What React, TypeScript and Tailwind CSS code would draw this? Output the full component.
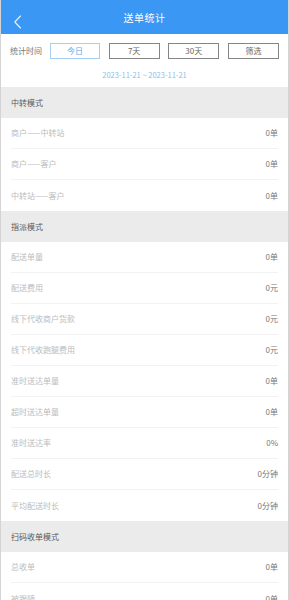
const font = { fontFamily: '"Noto Sans CJK SC", "Noto Sans", sans-serif' }

type Row = { label: string; value: string }

const sections: { title: string; rows: Row[] }[] = [
  {
    title: '中转模式',
    rows: [
      { label: '商户——中转站', value: '0单' },
      { label: '商户——客户', value: '0单' },
      { label: '中转站——客户', value: '0单' },
    ],
  },
  {
    title: '指派模式',
    rows: [
      { label: '配送单量', value: '0单' },
      { label: '配送费用', value: '0元' },
      { label: '线下代收商户货款', value: '0元' },
      { label: '线下代收跑腿费用', value: '0元' },
      { label: '准时送达单量', value: '0单' },
      { label: '超时送达单量', value: '0单' },
      { label: '准时送达率', value: '0%' },
      { label: '配送总时长', value: '0分钟' },
      { label: '平均配送时长', value: '0分钟' },
    ],
  },
  {
    title: '扫码收单模式',
    rows: [
      { label: '总收单', value: '0单' },
      { label: '被跟随', value: '0单' },
    ],
  },
]

export default function App() {
  const tabs = ['今日', '7天', '30天', '筛选']

  return (
    <div style={font} className="w-[289px] h-[600px] overflow-hidden bg-white border-x border-[#d4d4d4]">
      {/* header */}
      <div className="relative h-[34px] bg-[#3a97f3] flex items-center justify-center">
        <svg className="absolute left-[12px] top-[15px]" width="9" height="14" viewBox="0 0 9 14" fill="none">
          <path d="M7.5 1 L1.8 7 L7.5 13" stroke="#e8f2fd" strokeWidth="1.1" strokeLinecap="round" strokeLinejoin="round" />
        </svg>
        <span className="text-white text-[10px] tracking-[0.5px]">送单统计</span>
      </div>

      {/* filter */}
      <div className="flex items-center pt-[9px] pl-[9px] pr-[9px]">
        <span className="w-[40px] text-[8px] text-[#777]">统计时间</span>
        <div className="flex-1 flex justify-between">
          {tabs.map((t, i) => (
            <div
              key={t}
              className={
                i === 0
                  ? 'w-[50px] h-[16px] flex items-center justify-center border border-[#a7cff2] text-[8px] text-[#5aa6ec]'
                  : 'w-[51px] h-[16px] flex items-center justify-center border border-[#858585] text-[8px] text-[#666]'
              }
            >
              {t}
            </div>
          ))}
        </div>
      </div>
      <div className="h-[28px] pt-[4px] flex items-center justify-center text-[7.5px] text-[#8ebde9]">
        2023-11-21 ~ 2023-11-21
      </div>

      {sections.map((s) => (
        <div key={s.title}>
          <div className="h-[31px] bg-[#ebebeb] flex items-center pl-[10px] text-[8px] text-[#5a5a5a]">{s.title}</div>
          {s.rows.map((r, i) => (
            <div key={r.label} className="px-[10px]">
              <div
                className={
                  i < s.rows.length - 1
                    ? 'h-[31px] flex items-center justify-between border-b border-[#f2f2f2]'
                    : 'h-[31px] flex items-center justify-between'
                }
              >
                <span className="text-[8px] text-[#bcbcbc]">{r.label}</span>
                <span className="text-[8px] text-[#777]">{r.value}</span>
              </div>
            </div>
          ))}
        </div>
      ))}
    </div>
  )
}
